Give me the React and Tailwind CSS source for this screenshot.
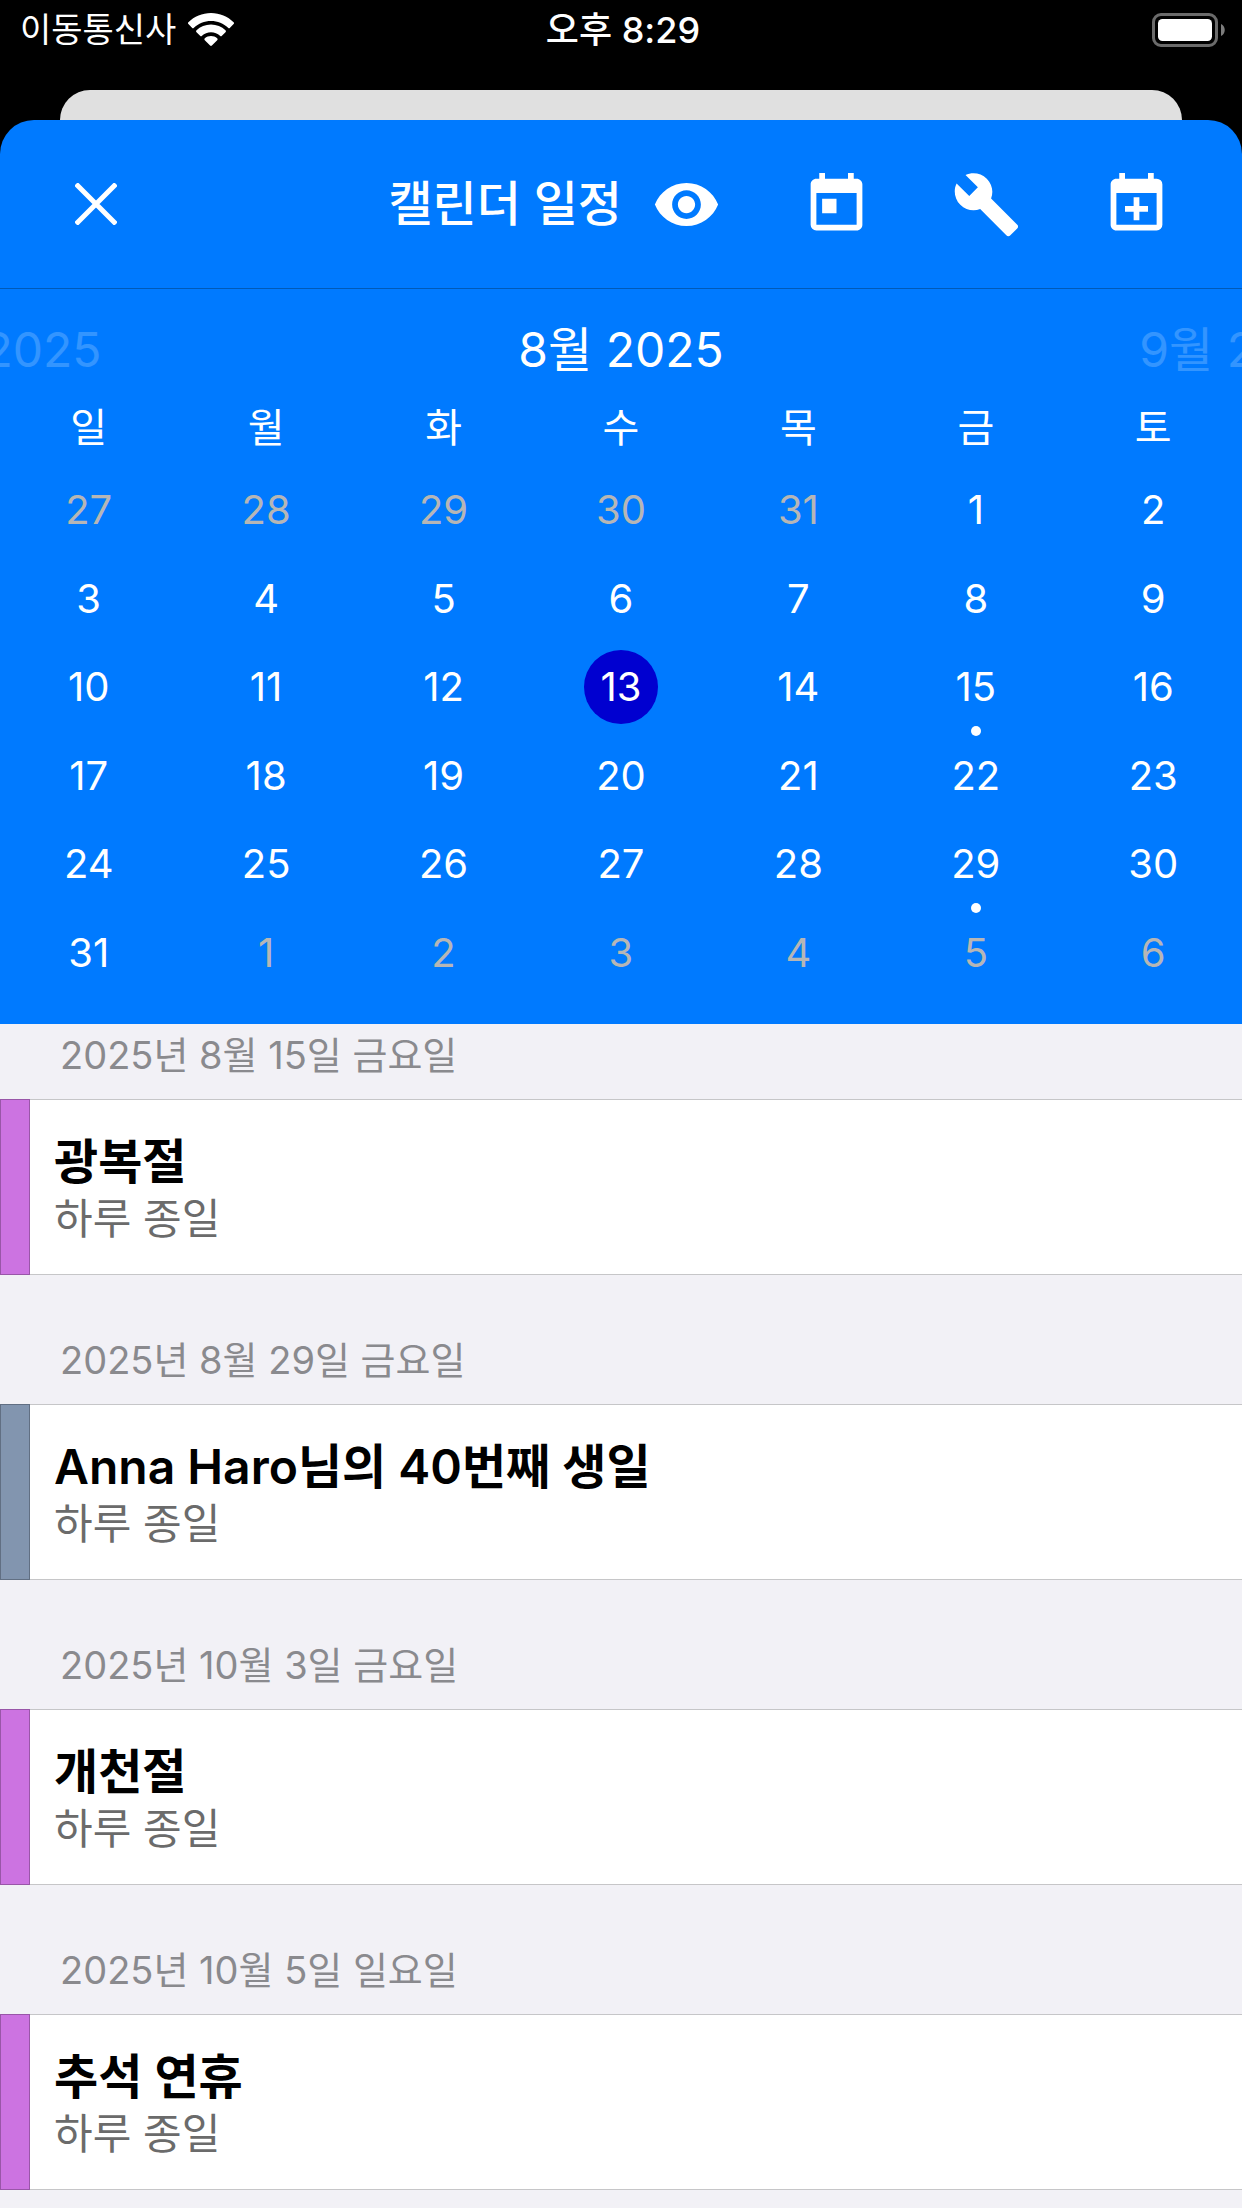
import React, { useState } from 'react';
import { MdVisibility, MdToday, MdBuild } from 'react-icons/md';

const WEEKDAYS = ['일', '월', '화', '수', '목', '금', '토'];

const WEEKS = [
    [27, 28, 29, 30, 31, 1, 2],
    [3, 4, 5, 6, 7, 8, 9],
    [10, 11, 12, 13, 14, 15, 16],
    [17, 18, 19, 20, 21, 22, 23],
    [24, 25, 26, 27, 28, 29, 30],
    [31, 1, 2, 3, 4, 5, 6],
];

const EVENT_DAYS = [15, 29];

const EVENTS = [
    { date: '2025년 8월 15일 금요일', title: '광복절', time: '하루 종일', bar: 'bg-[#cc73e1]' },
    { date: '2025년 8월 29일 금요일', title: 'Anna Haro님의 40번째 생일', time: '하루 종일', bar: 'bg-[#8295af]' },
    { date: '2025년 10월 3일 금요일', title: '개천절', time: '하루 종일', bar: 'bg-[#cc73e1]' },
    { date: '2025년 10월 5일 일요일', title: '추석 연휴', time: '하루 종일', bar: 'bg-[#cc73e1]' },
];

function isOutside(week, day) {
    return (week === 0 && day > 7) || (week === 5 && day < 7);
}

function StatusBar() {
    return (
        <div className="grid grid-cols-3 items-center h-[60px] pl-5 pr-4 text-white leading-[40px]">
            <div className="flex items-center gap-3 text-[34px]">
                <span>이동통신사</span>
                <svg width="46" height="34" viewBox="0 0 46 34" fill="currentColor" aria-hidden="true">
                    <path d="M23 0C14.200 0 6.200 3.500.4 9.200a1.300 1.300 0 0 0 0 1.900l3.600 3.700a1.300 1.300 0 0 0 1.900 0C10.400 10.500 16.400 8 23 8s12.600 2.500 17.100 6.800a1.300 1.300 0 0 0 1.900 0l3.600-3.700a1.300 1.300 0 0 0 0-1.900C39.800 3.500 31.800 0 23 0z" />
                    <path d="M23 11.500c-5.600 0-10.700 2.200-14.500 5.800a1.300 1.300 0 0 0 0 1.900l3.600 3.600a1.300 1.300 0 0 0 1.900 0c2.400-2.200 5.500-3.500 9-3.500s6.600 1.300 9 3.500a1.300 1.300 0 0 0 1.900 0l3.600-3.600a1.300 1.300 0 0 0 0-1.900c-3.800-3.600-8.900-5.800-14.500-5.800z" />
                    <path d="M23 23c-2.400 0-4.500.8-6.200 2.300a1.300 1.300 0 0 0 0 1.900l5.300 5.400a1.300 1.300 0 0 0 1.800 0l5.300-5.400a1.300 1.300 0 0 0 0-1.900C27.500 23.800 25.400 23 23 23z" />
                </svg>
            </div>
            <span className="text-center text-[36px] font-medium">오후 8:29</span>
            <svg className="justify-self-end" width="74" height="34" viewBox="0 0 74 34" aria-hidden="true">
                <rect x="1.500" y="1.500" width="63" height="31" rx="7.500" fill="none" stroke="#6b6b6b" strokeWidth="3" />
                <rect x="6" y="6" width="54" height="22" rx="4.500" fill="#fff" />
                <path d="M69 11c5 2 5 10 0 12z" fill="#7c7c7c" />
            </svg>
        </div>
    );
}

function Toolbar() {
    return (
        <header className="flex items-center h-[169px] pl-[75px] pr-[71px] border-b border-[#005ab8]">
            <button aria-label="닫기">
                <svg width="42" height="42" viewBox="0 0 42 42" stroke="currentColor" strokeWidth="5" aria-hidden="true">
                    <path d="M1 1l40 40M41 1L1 41" />
                </svg>
            </button>
            <h1 className="flex-1 text-right pr-[30px] text-[48px] leading-[60px] font-medium">캘린더 일정</h1>
            <div className="flex gap-[81px]">
                <button aria-label="보기"><MdVisibility size={69} /></button>
                <button aria-label="오늘"><MdToday size={69} /></button>
                <button aria-label="설정"><MdBuild size={69} /></button>
                <button aria-label="일정 추가">
                    <svg width="69" height="69" viewBox="0 0 24 24" fill="currentColor" aria-hidden="true">
                        <path d="M19 19V8H5v11h14M16 1h2v2h1a2 2 0 0 1 2 2v14a2 2 0 0 1-2 2H5c-1.110 0-2-.9-2-2V5c0-1.110.89-2 2-2h1V1h2v2h8V1m-5 8.500h2v3h3v2h-3v3h-2v-3H8v-2h3v-3z" />
                    </svg>
                </button>
            </div>
        </header>
    );
}

function Calendar() {
    const [selected, setSelected] = useState('2-13');

    return (
        <section className="pb-[27px]">
            {/* Month pager */}
            <div className="flex justify-center items-center overflow-hidden h-[101px] pt-5 text-[48px] leading-[60px] text-center whitespace-nowrap">
                <span className="w-1/2 shrink-0 opacity-20">7월 2025</span>
                <h2 className="w-1/2 shrink-0">8월 2025</h2>
                <span className="w-1/2 shrink-0 opacity-20">9월 2025</span>
            </div>
            <table className="w-full table-fixed text-[40px] leading-[48px] text-center">
                <thead>
                    <tr className="h-[76px]">
                        {WEEKDAYS.map((name) => <th key={name} className="p-0 font-normal">{name}</th>)}
                    </tr>
                </thead>
                <tbody className="h-[531px]">
                    {WEEKS.map((week, w) => (
                        <tr key={w}>
                            {week.map((day) => {
                                const key = `${w}-${day}`;
                                const outside = isOutside(w, day);
                                return (
                                    <td key={key} className="p-0">
                                        <button
                                            onClick={() => setSelected(key)}
                                            className={`relative block size-[74px] mx-auto rounded-full ${outside ? 'text-[#b6b6b6]' : ''} ${selected === key ? 'bg-[#0000d0]' : ''}`}
                                        >
                                            {day}
                                            {!outside && EVENT_DAYS.includes(day) && (
                                                <span className="absolute top-full left-1/2 -translate-x-1/2 mt-0.5 size-2.5 rounded-full bg-white" />
                                            )}
                                        </button>
                                    </td>
                                );
                            })}
                        </tr>
                    ))}
                </tbody>
            </table>
        </section>
    );
}

function Agenda() {
    return (
        <main className="bg-[#f2f1f6] pb-[18px]">
            {EVENTS.map((event, i) => (
                <section key={event.date}>
                    <h3 className={`flex items-end pl-[60px] pb-5 text-[38px] leading-[48px] text-[#8a8a8e] ${i === 0 ? 'h-[75px]' : 'h-[129px]'}`}>
                        {event.date}
                    </h3>
                    <div className="flex h-[176px] bg-white">
                        <div className={`w-[30px] border border-black/25 ${event.bar}`} />
                        <div className="flex-1 flex flex-col justify-center pt-1 pl-6 border-y border-[#c6c6c8]">
                            <p className="text-[48px] leading-[60px] font-semibold text-black">{event.title}</p>
                            <p className="text-[42px] leading-[54px] text-[#6b6b6b]">{event.time}</p>
                        </div>
                    </div>
                </section>
            ))}
        </main>
    );
}

export default function App() {
    return (
        <div className="min-h-screen bg-black font-[Inter,'Noto_Sans_CJK_KR',sans-serif]">
            <StatusBar />
            <div className="h-[60px] mt-[30px] -mb-[30px] mx-[60px] rounded-t-[30px] bg-[#e0e0e0]" />
            <div className="relative rounded-t-[34px] overflow-hidden bg-[#007aff] text-white">
                <Toolbar />
                <Calendar />
                <Agenda />
            </div>
        </div>
    );
}
